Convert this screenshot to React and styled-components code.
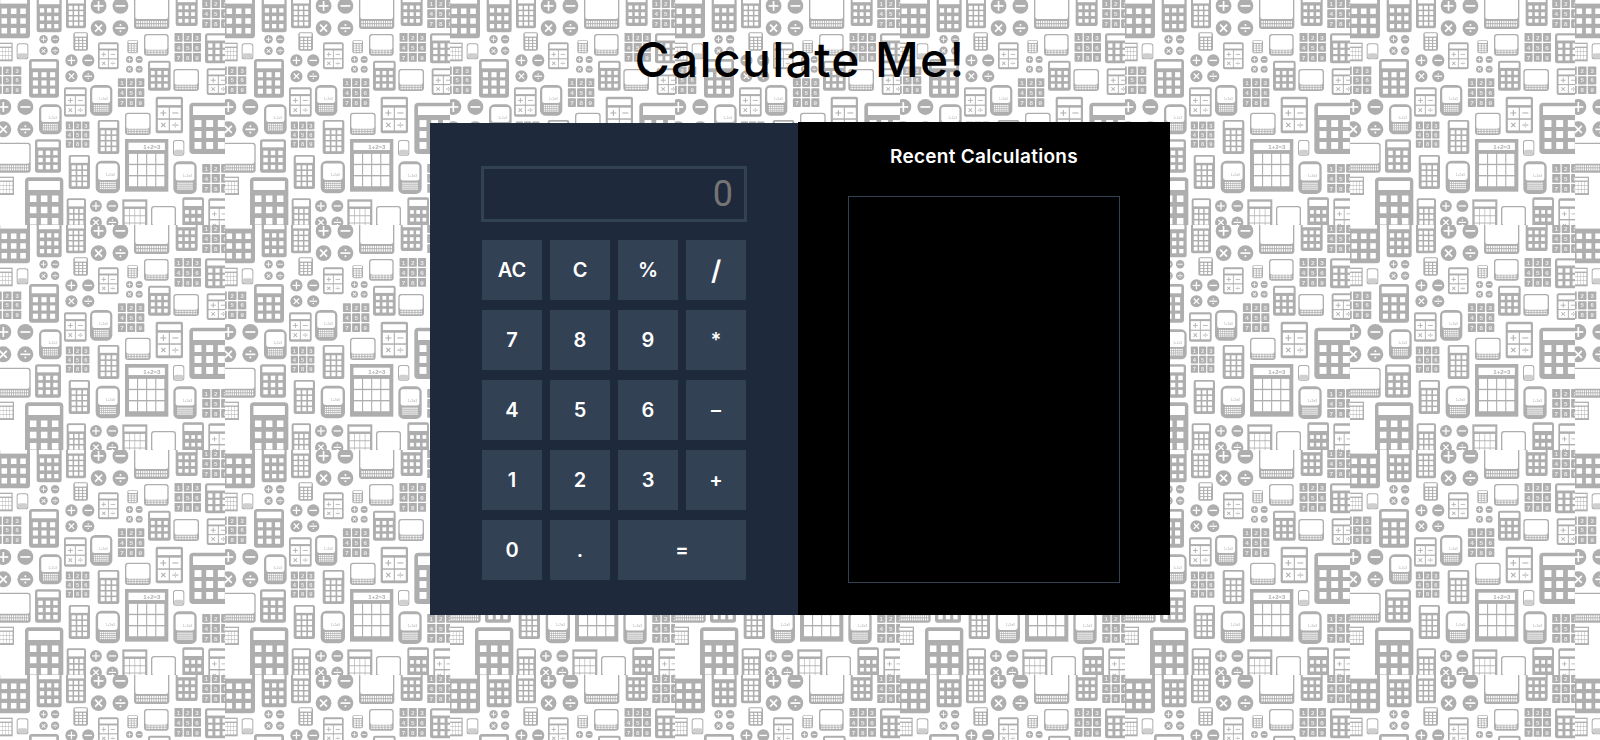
import { createGlobalStyle, styled } from "styled-components";

// background tile, drawn in 3x units (675 = 225px on the page)
const GREY = "#aeaeae";
const WHITE = "#ffffff";

const box = (x, y, w, h, r = 0, fill = GREY) =>
  `<rect x="${x}" y="${y}" width="${w}" height="${h}" rx="${r}" fill="${fill}"/>`;

const grid = (x, y, w, h, cols, rows, fw, fh, fill = WHITE) => {
  let out = "";
  for (let c = 0; c < cols; c++) {
    for (let r = 0; r < rows; r++) {
      const cx = x + (w * (c + 0.5)) / cols - fw / 2;
      const cy = y + (h * (r + 0.5)) / rows - fh / 2;
      out += box(cx, cy, fw, fh, 0, fill);
    }
  }
  return out;
};

const sign = (kind, cx, cy, s, color) => {
  const t = s * 0.34;
  const bar = (rot) =>
    `<rect x="${cx - s}" y="${cy - t / 2}" width="${s * 2}" height="${t}" fill="${color}" transform="rotate(${rot} ${cx} ${cy})"/>`;
  if (kind === "+") return bar(0) + bar(90);
  if (kind === "-") return bar(0);
  if (kind === "x") return bar(45) + bar(135);
  return (
    bar(0) +
    `<circle cx="${cx}" cy="${cy - s * 0.62}" r="${t * 0.6}" fill="${color}"/>` +
    `<circle cx="${cx}" cy="${cy + s * 0.62}" r="${t * 0.6}" fill="${color}"/>`
  );
};

const keypad = (x0, y0, x1, y1) => {
  const w = x1 - x0;
  const h = y1 - y0;
  return (
    box(x0, y0, w, h, w * 0.1) +
    box(x0 + w * 0.09, y0 + h * 0.07, w * 0.82, h * 0.17, 0, WHITE) +
    grid(x0 + w * 0.07, y0 + h * 0.3, w * 0.86, h * 0.64, 3, 3, w * 0.17, w * 0.17)
  );
};

const tall = (x0, y0, x1, y1) => {
  const w = x1 - x0;
  const h = y1 - y0;
  return (
    box(x0, y0, w, h, 6) +
    box(x0 + w * 0.1, y0 + h * 0.05, w * 0.8, h * 0.18, 0, WHITE) +
    grid(x0 + w * 0.1, y0 + h * 0.28, w * 0.8, h * 0.66, 3, 4, w * 0.19, h * 0.12)
  );
};

const numpad = (x0, y0, x1, y1) => {
  const w = x1 - x0;
  const h = y1 - y0;
  const cw = w * 0.29;
  const ch = h * 0.29;
  let out = "";
  let n = 1;
  for (let r = 0; r < 3; r++) {
    for (let c = 0; c < 3; c++) {
      const x = x0 + (w * c) / 3 + w * 0.02;
      const y = y0 + (h * r) / 3 + h * 0.02;
      out += box(x, y, cw, ch, 2);
      out += `<text x="${x + cw / 2}" y="${y + ch * 0.76}" font-family="Liberation Sans" font-weight="700" font-size="${ch * 0.72}" text-anchor="middle" fill="#ececec">${n}</text>`;
      n++;
    }
  }
  return out;
};

const wide = (x0, y0, x1, y1) => {
  const w = x1 - x0;
  const h = y1 - y0;
  return (
    box(x0, y0, w, h, 9) +
    box(x0 + 4, y0 + 4, w - 8, h * 0.66, 6, WHITE) +
    grid(x0 + 6, y0 + h * 0.74, w - 12, h * 0.2, 14, 2, (w - 12) * 0.045, h * 0.07)
  );
};

const opcalc = (x0, y0, x1, y1) => {
  const w = x1 - x0;
  const h = y1 - y0;
  const px = x0 + w * 0.08;
  const py = y0 + h * 0.3;
  const pw = w * 0.4;
  const ph = h * 0.29;
  const s = w * 0.11;
  const cell = (k, c, r) => {
    const x = px + c * (pw + w * 0.04);
    const y = py + r * (ph + h * 0.04);
    return box(x, y, pw, ph, 0, WHITE) + sign(k, x + pw / 2, y + ph / 2, s, GREY);
  };
  return (
    box(x0, y0, w, h, 6) +
    box(x0 + w * 0.08, y0 + h * 0.07, w * 0.84, h * 0.16, 0, WHITE) +
    cell("+", 0, 0) +
    cell("-", 1, 0) +
    cell("x", 0, 1) +
    cell("/", 1, 1)
  );
};

const circles = (x0, y0, x1, y1) => {
  const r = (x1 - x0) * 0.21;
  const dot = (k, cx, cy) =>
    `<circle cx="${cx}" cy="${cy}" r="${r}" fill="${GREY}"/>` + sign(k, cx, cy, r * 0.62, WHITE);
  return (
    dot("+", x0 + r, y0 + r) +
    dot("-", x1 - r, y0 + r) +
    dot("x", x0 + r, y1 - r) +
    dot("/", x1 - r, y1 - r)
  );
};

const sheet = (x0, y0, x1, y1, label) => {
  const w = x1 - x0;
  const h = y1 - y0;
  const top = y0 + h * 0.27;
  const tx = x0 + w * 0.08;
  const tw = w * 0.84;
  const th = h * 0.64;
  return (
    box(x0, y0, w, h) +
    box(x0 + w * 0.08, y0 + h * 0.07, w * 0.84, h * 0.14, 0, WHITE) +
    (label
      ? `<text x="${x0 + w * 0.62}" y="${y0 + h * 0.19}" font-family="Liberation Sans" font-weight="700" font-size="${h * 0.115}" text-anchor="middle" fill="${GREY}">${label}</text>`
      : "") +
    grid(tx, top, tw, th, 4, 3, (tw / 4) * 0.88, (th / 3) * 0.88)
  );
};

const phone = (x0, y0, x1, y1) => {
  const w = x1 - x0;
  const h = y1 - y0;
  return (
    box(x0, y0, w, h, w * 0.24) +
    box(x0 + w * 0.1, y0 + h * 0.09, w * 0.8, h * 0.5, w * 0.1, WHITE) +
    `<text x="${x0 + w * 0.6}" y="${y0 + h * 0.48}" font-family="Liberation Sans" font-size="${h * 0.1}" text-anchor="middle" fill="${GREY}">1+2=3</text>` +
    grid(x0 + w * 0.16, y0 + h * 0.64, w * 0.68, h * 0.24, 8, 4, w * 0.06, h * 0.04)
  );
};

const device = (x0, y0, x1, y1) => {
  const w = x1 - x0;
  const h = y1 - y0;
  return (
    box(x0, y0, w, h, 8) +
    box(x0 + 3, y0 + 3, w - 6, h - 6, 6, WHITE) +
    box(x0 + 3, y0 + h * 0.62, w - 6, h * 0.38 - 3, 6, "#cfcfcf")
  );
};

const shapes = [
  keypad(-8, -22, 90, 115),
  keypad(110, -14, 185, 97),
  tall(198, -12, 258, 85),
  circles(272, -6, 385, 108),
  wide(402, -12, 508, 87),
  keypad(527, -16, 593, 78),
  numpad(605, -4, 690, 86),
  circles(118, 105, 178, 165),
  tall(220, 97, 264, 152),
  wide(432, 102, 506, 167),
  numpad(522, 97, 605, 187),
  keypad(615, 100, 690, 190),
  sheet(-4, 128, 38, 184),
  device(50, 130, 85, 178),
  opcalc(294, 127, 356, 208),
  tall(382, 120, 414, 160),
  circles(378, 168, 428, 218),
  keypad(87, 177, 177, 293),
  circles(196, 163, 283, 247),
  keypad(444, 182, 512, 272),
  wide(520, 207, 597, 273),
  opcalc(620, 205, 690, 285),
  numpad(-22, 198, 66, 284),
  numpad(352, 233, 435, 323),
  opcalc(192, 262, 260, 350),
  phone(270, 255, 337, 347),
  circles(-14, 297, 100, 412),
  phone(117, 313, 185, 403),
  opcalc(467, 290, 549, 400),
  keypad(568, 308, 690, 462),
  numpad(196, 363, 270, 445),
  wide(375, 338, 452, 405),
  tall(293, 360, 358, 462),
  wide(-10, 428, 92, 518),
  keypad(105, 418, 183, 518),
  sheet(375, 417, 505, 575, "1+2=3"),
  device(519, 420, 553, 467),
  tall(206, 465, 270, 567),
  phone(287, 482, 360, 580),
  phone(520, 484, 590, 582),
  numpad(605, 490, 690, 580),
  sheet(-4, 530, 42, 585),
  keypad(75, 532, 190, 690),
  tall(200, 595, 258, 700),
  circles(270, 600, 355, 685),
  sheet(367, 598, 442, 700),
  wide(453, 618, 528, 700),
  keypad(547, 592, 612, 700),
  opcalc(625, 595, 690, 700),
].join("");

const tile = `<svg xmlns="http://www.w3.org/2000/svg" width="225" height="225" viewBox="0 0 675 675"><defs><filter id="b" x="-5%" y="-5%" width="110%" height="110%"><feGaussianBlur stdDeviation="1"/></filter></defs><rect width="675" height="675" fill="#fff"/><g filter="url(#b)">${shapes}</g></svg>`;
const tileUrl = `url("data:image/svg+xml,${encodeURIComponent(tile)}")`;

const GlobalStyle = createGlobalStyle`
  html, body {
    margin: 0;
    padding: 0;
  }
  body {
    min-height: 740px;
    background-color: #fff;
    background-image: ${tileUrl};
    background-size: 225px 225px;
    font-family: Inter, "Liberation Sans", sans-serif;
  }
`;

const Page = styled.div`
  display: flex;
  flex-direction: column;
  align-items: center;
  height: 740px;
  overflow: hidden;
`;

const Title = styled.h1`
  margin: 24px 0 0;
  height: 98px;
  line-height: 72px;
  font-size: 48px;
  font-weight: 500;
  letter-spacing: 1.3px;
  color: #000;
`;

const Calculator = styled.main`
  display: flex;
  align-items: flex-end;
  width: 740px;
  height: 493px;
`;

const KeypadPanel = styled.section`
  box-sizing: border-box;
  width: 368px;
  height: 492px;
  padding: 43px 0 0 51px;
  background: #1e293b;
`;

const Display = styled.div`
  box-sizing: border-box;
  width: 266px;
  height: 56px;
  padding-right: 11px;
  margin-bottom: 18px;
  border: 3px solid #334155;
  background: #1e293b;
  color: #757575;
  font-family: Roboto, "Liberation Sans", sans-serif;
  font-size: 36px;
  line-height: 50px;
  text-align: right;
`;

const Keys = styled.div`
  display: grid;
  grid-template-columns: repeat(4, 60px);
  grid-auto-rows: 60px;
  gap: 10px 8px;
  margin-left: 1px;
`;

const Key = styled.button`
  grid-column: ${({ $wide }) => ($wide ? "span 2" : "auto")};
  padding: 0;
  border: none;
  background: #334155;
  color: #fff;
  font-family: Inter, "Liberation Sans", sans-serif;
  font-size: ${({ $large }) => ($large ? "27px" : "20px")};
  font-weight: 600;
  cursor: pointer;
`;

const HistoryPanel = styled.aside`
  box-sizing: border-box;
  display: flex;
  flex-direction: column;
  align-items: center;
  width: 372px;
  height: 493px;
  padding-top: 20px;
  background: #000;
`;

const HistoryTitle = styled.h2`
  margin: 0 0 24px;
  line-height: 30px;
  font-size: 19px;
  font-weight: 600;
  letter-spacing: 0.28px;
  color: #fff;
`;

const HistoryList = styled.div`
  box-sizing: border-box;
  width: 272px;
  height: 387px;
  border: 1px solid #334155;
`;

const KEYS = ["AC", "C", "%", "/", "7", "8", "9", "*", "4", "5", "6", "–", "1", "2", "3", "+", "0", ".", "="];

const App = () => {
  return (
    <Page>
      <GlobalStyle />
      <Title>Calculate Me!</Title>
      <Calculator>
        <KeypadPanel>
          <Display>0</Display>
          <Keys>
            {KEYS.map((k) => (
              <Key key={k} $wide={k === "="} $large={k === "/"}>
                {k}
              </Key>
            ))}
          </Keys>
        </KeypadPanel>
        <HistoryPanel>
          <HistoryTitle>Recent Calculations</HistoryTitle>
          <HistoryList />
        </HistoryPanel>
      </Calculator>
    </Page>
  );
};

export default App;
